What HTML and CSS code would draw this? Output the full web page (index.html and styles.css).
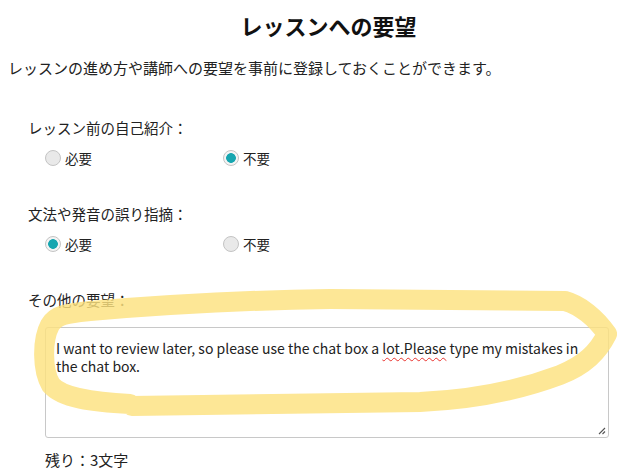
FILE: index.html
```html
<!DOCTYPE html>
<html lang="ja">
<head>
<meta charset="utf-8">
<title>レッスンへの要望</title>
<link rel="stylesheet" href="styles.css">
</head>
<body>
<main class="page">
  <h1 class="title">レッスンへの要望</h1>
  <p class="lead">レッスンの進め方や講師への要望を事前に登録しておくことができます。</p>

  <section class="field field-first">
    <div class="field-label">レッスン前の自己紹介：</div>
    <div class="options">
      <label class="option"><input type="radio" name="intro"><span>必要</span></label>
      <label class="option"><input type="radio" name="intro" checked><span>不要</span></label>
    </div>
  </section>

  <section class="field">
    <div class="field-label">文法や発音の誤り指摘：</div>
    <div class="options">
      <label class="option"><input type="radio" name="correct" checked><span>必要</span></label>
      <label class="option"><input type="radio" name="correct"><span>不要</span></label>
    </div>
  </section>

  <section class="field">
    <div class="field-label">その他の要望：</div>
    <div class="textarea">I want to review later, so please use the chat box a <span class="misspell">lot.Please</span> type my mistakes in the chat box.<svg class="grip" width="8" height="8" viewBox="0 0 8 8"><path d="M7 1 L1 7 M7 4.5 L4.5 7" stroke="#555" stroke-width="1.1" fill="none"/></svg></div>
    <div class="remaining">残り：3文字</div>
  </section>
</main>

<svg class="highlight" width="632" height="475" viewBox="0 0 632 475">
  <path d="M130 404 C 92 402, 62 398, 51 385 C 42 370, 42 340, 50 325 C 56 314, 70 313, 90 311 C 150 306, 250 300, 330 299 L 565 301 C 580 305, 596 318, 607 334 C 598 352, 585 365, 560 375 C 520 390, 470 400, 420 402 L 132 406" fill="none" stroke="#fde27f" stroke-width="20" stroke-linecap="round" stroke-linejoin="round"/>
</svg>
</body>
</html>
```

FILE: styles.css
```css
html, body {
  margin: 0;
  padding: 0;
  background: #fff;
}

body {
  position: relative;
  width: 632px;
  height: 475px;
  overflow: hidden;
  color: #222;
  font-family: "Noto Sans CJK JP", "Noto Sans", sans-serif;
}

.page {
  padding: 0 8px;
}

.title {
  margin: 10px 0 0;
  padding-left: 25px;
  font-size: 22px;
  line-height: 30px;
  font-weight: 700;
  text-align: center;
  color: #111;
}

.lead {
  margin: 17px 0 0;
  font-size: 15px;
  line-height: 22px;
}

.field {
  margin-top: 34px;
}

.field-first {
  margin-top: 38px;
}

.field-label {
  padding-left: 20px;
  font-size: 14.5px;
  line-height: 22px;
}

.options {
  display: grid;
  grid-template-columns: 178px 178px;
  margin-top: 8px;
  padding-left: 37px;
  height: 22px;
}

.option {
  display: flex;
  align-items: center;
  gap: 4px;
  font-size: 13.5px;
  line-height: 22px;
}

.option input {
  appearance: none;
  -webkit-appearance: none;
  margin: 0;
  width: 16px;
  height: 16px;
  border-radius: 50%;
  border: 1px solid #c4c4c4;
  background: #e9e9e9;
  box-sizing: border-box;
}

.option input:checked {
  background: radial-gradient(circle, #17a6b0 0 4.5px, #f4f4f4 5.2px);
}

.textarea {
  position: relative;
  box-sizing: border-box;
  margin: 16px 0 0 37px;
  width: 564px;
  height: 111px;
  padding: 11px 10px;
  border: 1px solid #c8c8c8;
  border-radius: 3px;
  font-family: "Noto Sans CJK JP", "Noto Sans", sans-serif;
  font-size: 14px;
  line-height: 18px;
  color: #222;
}

.misspell {
  text-decoration: underline wavy #e8332f;
  text-decoration-thickness: 1px;
  text-underline-offset: 3px;
}

.grip {
  position: absolute;
  right: 2px;
  bottom: 2px;
}

.remaining {
  margin-top: 11px;
  padding-left: 37px;
  font-size: 15px;
  line-height: 22px;
}

.highlight {
  position: absolute;
  left: 0;
  top: 0;
  pointer-events: none;
  opacity: 0.82;
}
```
